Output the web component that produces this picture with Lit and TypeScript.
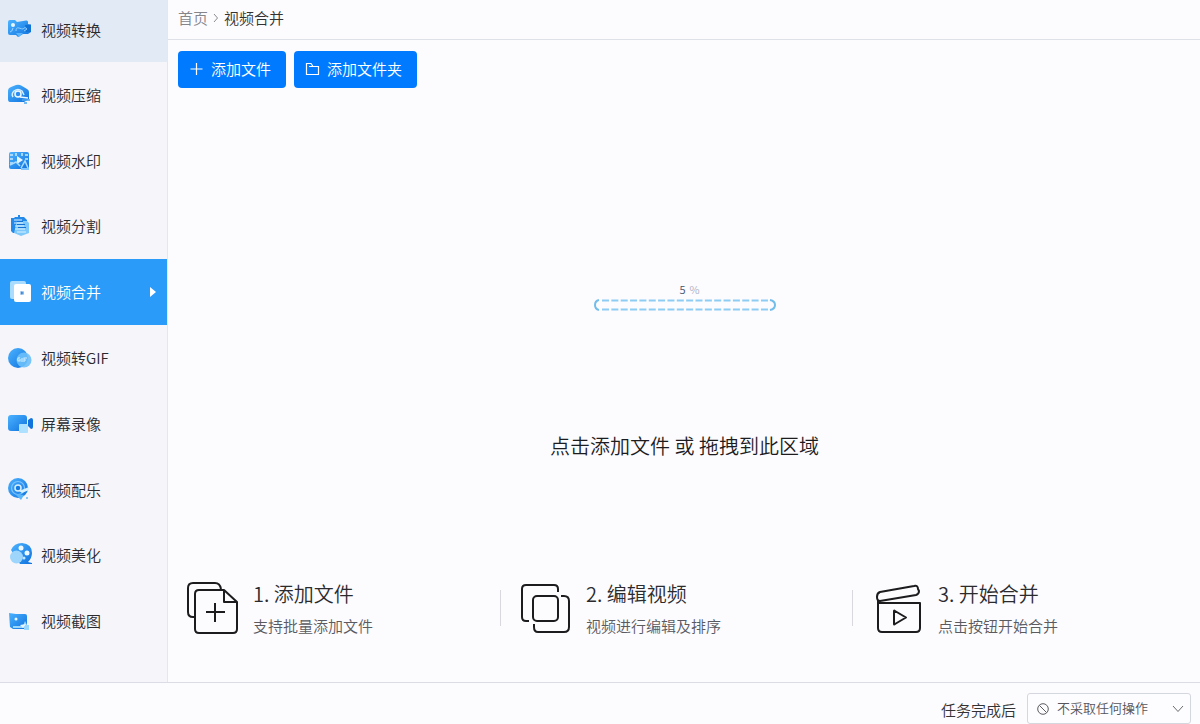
import { LitElement, html, css, svg } from "lit";
import { customElement, state } from "lit/decorators.js";
import { classMap } from "lit/directives/class-map.js";

const icons: Record<string, unknown> = {
  convert: svg`<path d="M3 3H8L10 5L19 3.500Q21 3 21 5V7L24 8V15L21 17H16L11 20L9 18H3Q1 18 1 16V5Q1 3 3 3Z" fill="url(#g)"/><path d="M18 8L24 7.500V15H19Z" fill="#1173d6"/><circle cx="6" cy="8" r="2" fill="#e8f6ff"/><path d="M3 15Q5 15 6 11" fill="none" stroke="#9bd4ff"/><path d="M9 14Q9 10 12 11T16 12Q18 9 20 12L17 14" fill="none" stroke="#8bccff"/><path d="M9 16H16L12 20Z" fill="#5bb6ff"/>`,
  compress: svg`<path d="M1 9Q1 6 4 5L9 3Q12 2 15 4L20 7Q22 8 22 10V17L17 20H3Q1 20 1 17Z" fill="url(#g)"/><path d="M6 15Q4 12 7 9Q11 6 15 9L17 13" fill="none" stroke="#d7f0ff" stroke-width="1.500"/><circle cx="11" cy="12" r="3" fill="#2c8df0" stroke="#f2fbff" stroke-width="1.500"/><path d="M13 15L21 16" stroke="#e9f7ff" stroke-width="1.500"/><path d="M15 18H23M17 21H20" stroke="#4ca6ee" stroke-width="1.500"/>`,
  watermark: svg`<rect x="2" y="4" width="20" height="17" rx="2" fill="url(#g)"/><path d="M3 7H6M3 11H6M3 15H6M18 7H21M18 11H21M9 5V8M15 5V8" stroke="#c9eaff" stroke-width="1.500"/><path d="M10 8L16 12L10 16Z" fill="#e8f7ff"/><path d="M3 17L9 14L13 18M14 20L18 13L21 20" fill="none" stroke="#a9dcff" stroke-width="1.500"/><path d="M14 20H22V22H14Z" fill="#81c5fb"/>`,
  split: svg`<path d="M4 5H7L8 4H11V2H13V4H17L20 7V20H6L4 18Z" fill="#2489e8"/><path d="M10 8H20L22 10V20L14 23L7 20Z" fill="#7fc8fb"/><path d="M7 7H15M7 10H16M8 13H17M8 16H18M10 19H19" stroke="#d7f1ff" stroke-width="1.200"/><path d="M10 8.500H16M10 11.500H18M11 14.500H19" stroke="#1472d7" stroke-width="1"/>`,
  merge: svg`<rect x="3" y="2" width="16" height="18" rx="2" fill="#a9dcff"/><rect x="7" y="5" width="17" height="18" rx="2" fill="#fff"/><rect x="13" y="12" width="4" height="4" rx="1" fill="#a6cbee"/><path d="M14 12.500L17 14L14 15.500Z" fill="#3d8ad5"/>`,
  gif: svg`<circle cx="11" cy="13" r="10" fill="url(#g)"/><circle cx="17" cy="15" r="7.500" fill="#6cc0fa" opacity=".9"/><path d="M13 13Q10 12 11 16H13V14M15 13V17M17 17V13H20M17 15H19" fill="none" stroke="#c9ebff" stroke-width="1.200"/>`,
  record: svg`<rect x="1" y="4" width="19" height="16" rx="3" fill="url(#g)"/><path d="M21 9L24 7Q26 7 26 9V16Q26 18 24 18L21 15Z" fill="#1173dc"/><rect x="12" y="13" width="9" height="9" rx="1" fill="#aee0ff"/>`,
  music: svg`<circle cx="11" cy="11" r="10" fill="url(#g)"/><circle cx="11" cy="11" r="6.500" fill="none" stroke="#7ec4ff" stroke-width="1.200"/><circle cx="11" cy="11" r="3" fill="#147be2" stroke="#d8f0ff" stroke-width="1.500"/><path d="M12 14L22 10V13L15 16Z" fill="#d9f2ff"/><path d="M8 17L14 23L17 18Z" fill="#5bb6f7"/><circle cx="20" cy="21" r="1" fill="#69b9ee"/>`,
  beautify: svg`<path d="M4 8Q7 1 15 1Q25 2 25 11Q25 16 21 20L25 21V22H13Z" fill="url(#g)"/><circle cx="14" cy="6" r="2.500" fill="#edf9ff"/><circle cx="20" cy="11" r="2.500" fill="#edf9ff"/><circle cx="17" cy="16" r="1.500" fill="#c3e7ff"/><circle cx="9.500" cy="15" r="6.500" fill="#9ed5fb"/>`,
  capture: svg`<path d="M2 5L9 6H18Q20 6 20 8V21H6L3 19Z" fill="url(#g)"/><circle cx="9" cy="11" r="1.500" fill="#eaf8ff"/><path d="M6 18H16L18 13L20 17H22V22H17V20H6Z" fill="#9ad7ff"/><path d="M13 17L19 16L16 20Z" fill="#e5f6ff"/>`,
};

const menu = [
  { icon: "convert", label: "视频转换" },
  { icon: "compress", label: "视频压缩" },
  { icon: "watermark", label: "视频水印" },
  { icon: "split", label: "视频分割" },
  { icon: "merge", label: "视频合并" },
  { icon: "gif", label: "视频转GIF" },
  { icon: "record", label: "屏幕录像" },
  { icon: "music", label: "视频配乐" },
  { icon: "beautify", label: "视频美化" },
  { icon: "capture", label: "视频截图" },
];

const steps = [
  {
    title: "1. 添加文件",
    text: "支持批量添加文件",
    icon: svg`<path d="M7 36H6Q1 36 1 31V7Q1 2 6 2H28Q33 2 34 8"/><path d="M12 9H37L50 21V48Q50 52 46 52H12Q8 52 8 48V13Q8 9 12 9Z"/><path d="M37 9V21H50M28 22V41M19 31H38"/>`,
  },
  {
    title: "2. 编辑视频",
    text: "视频进行编辑及排序",
    icon: svg`<path d="M9 40H6Q2 40 2 36V8Q2 4 6 4H34Q38 4 38 8V11"/><rect x="13" y="15" width="25" height="25" rx="4"/><path d="M41 15H44Q49 15 49 20V46Q49 51 44 51H18Q14 51 14 46V43"/>`,
  },
  {
    title: "3. 开始合并",
    text: "点击按钮开始合并",
    icon: svg`<path d="M8 11L42 5Q46 4 46 8L47 10Q47 13 44 14L8 20Q5 20 5 16Q5 12 8 11Z"/><path d="M6 20V47Q6 51 10 51H44Q48 51 48 47V22H7"/><path d="M22 30Q22 29 23 30L34 36.500L23 43Q22 44 22 43Z"/>`,
  },
];

@customElement("app-root")
export class AppRoot extends LitElement {
  @state() private active = "merge";

  static styles = css`
    :host {
      display: grid;
      grid-template-rows: minmax(0, 1fr) 42px;
      height: 100vh;
      overflow: hidden;
      background: #fcfbfe;
      color: #333;
      font-family: "Noto Sans CJK SC", sans-serif;
      font-size: 15px;
      font-weight: 350;
      line-height: 22px;
    }
    * { box-sizing: border-box; }
    button, select { font: inherit; }
    button { border: 0; cursor: pointer; }
    svg { display: block; flex: none; }
    .body { display: grid; grid-template-columns: 168px minmax(0, 1fr); }
    .nav {
      display: grid;
      grid-template-rows: 62px repeat(9, 1fr);
      padding-bottom: 28px;
      background: #f6f5f9;
      border-right: 1px solid #e3e7f0;
    }
    .item {
      display: flex;
      align-items: center;
      gap: 8px;
      padding: 0 11px 0 7px;
      background: none;
      color: #2b2b2e;
      text-align: left;
    }
    .item:first-child { padding-bottom: 2px; background: #e2eaf6; }
    .item.active { background: #2a9bf8; color: #fff; }
    .name { flex: 1; }
    .arrow { border-left: 6px solid #fff; border-top: 5px solid transparent; border-bottom: 5px solid transparent; }
    .main { display: flex; flex-direction: column; min-width: 0; }
    .crumbs {
      display: flex;
      align-items: center;
      gap: 5px;
      height: 40px;
      padding: 0 10px 3px;
      border-bottom: 1px solid #dfe1e8;
    }
    .crumbs a { color: #85858a; text-decoration: none; }
    .tools { display: flex; gap: 8px; padding: 11px 10px 0; }
    .primary {
      display: flex;
      align-items: center;
      gap: 7px;
      height: 37px;
      padding: 0 15px 1px 11px;
      border-radius: 4px;
      background: #007bff;
      color: #fff;
    }
    .drop {
      display: flex;
      flex: 1;
      flex-direction: column;
      align-items: center;
      justify-content: center;
      gap: 119px;
      padding: 76px 0 0 1px;
      background: none;
      color: #1d1d1f;
    }
    .progress { display: grid; justify-items: center; gap: 2px; }
    .percent { display: flex; gap: 4px; padding-left: 10px; font-size: 11px; line-height: 16px; color: #42526b; }
    .unit { color: #aab0c4; }
    .hint { font-size: 20px; line-height: 32px; }
    .steps { display: grid; grid-template-columns: 332fr 352fr 348fr; padding-bottom: 45px; }
    .step { position: relative; display: flex; align-items: center; gap: 13px; padding-left: 19px; }
    .step + .step { padding-left: 20px; }
    .step + .step::before {
      content: "";
      position: absolute;
      left: 0;
      height: 36px;
      border-left: 1px solid #d8d8de;
    }
    .title { margin: 0 0 6px; font-size: 20px; line-height: 30px; font-weight: inherit; color: #2b2b2e; }
    .text { margin: 0; color: #5a5a5f; }
    .footer {
      display: flex;
      align-items: flex-end;
      justify-content: flex-end;
      gap: 11px;
      padding-right: 9px;
      border-top: 1px solid #dcdde4;
    }
    .footer label { padding-bottom: 3px; }
    .picker { display: grid; grid-template-columns: 36px 1fr 19px; align-items: center; width: 164px; height: 31px; }
    .picker > * { grid-row: 1; }
    .picker select {
      grid-column: 1 / -1;
      width: 100%;
      height: 31px;
      padding: 0 24px 1px 29px;
      appearance: none;
      border: 1px solid #d5d7df;
      border-radius: 3px;
      background: #fdfcff;
      color: #55555a;
      font-size: 13px;
    }
    .ban, .chevron { z-index: 1; pointer-events: none; }
    .ban { grid-column: 1; margin-left: 10px; }
    .chevron { grid-column: 3; }
  `;

  render() {
    return html`
      <div class="body">
        <nav class="nav">
          ${menu.map(
            (m) => html`<button
              class=${classMap({ item: true, active: m.icon === this.active })}
              @click=${() => (this.active = m.icon)}
            >
              <svg width="26" height="26" viewBox="0 0 26 26" aria-hidden="true">
                <defs><linearGradient id="g" x1="0" y1="0" x2="1" y2="1"><stop stop-color="#4cb3ff" /><stop offset="1" stop-color="#0f72de" /></linearGradient></defs>
                ${icons[m.icon]}
              </svg>
              <span class="name">${m.label}</span>
              ${m.icon === this.active ? html`<span class="arrow"></span>` : ""}
            </button>`
          )}
        </nav>
        <main class="main">
          <header class="crumbs">
            <a href="#">首页</a>
            <svg width="6" height="10" viewBox="0 0 6 10" fill="none" stroke="#8b8b90"><path d="M1 1L4.500 5L1 9" /></svg>
            <span>视频合并</span>
          </header>
          <div class="tools">
            <button class="primary">
              <svg width="15" height="14" viewBox="0 0 15 14" stroke="#fff" stroke-width="1.200"><path d="M7.500 1V13M1.500 7H13.500" /></svg>
              添加文件
            </button>
            <button class="primary">
              <svg width="15" height="14" viewBox="0 0 15 14" fill="none" stroke="#fff" stroke-width="1.200"><path d="M1.500 12.500V1.500H6L8 4.500H13.500V12.500ZM4 4.500H8" /></svg>
              添加文件夹
            </button>
          </div>
          <button class="drop">
            <span class="progress" role="progressbar" aria-label="进度" aria-valuenow="5" aria-valuemin="0" aria-valuemax="100">
              <span class="percent"><span>5</span><span class="unit">%</span></span>
              <svg width="182" height="12" viewBox="0 0 182 12" fill="none" stroke="#8dccf3" stroke-width="2">
                <path d="M8 1.500H174M8 10.500H174" stroke-dasharray="7 2.350" />
                <path d="M5 1Q1 2 1 6Q1 10 5 11" stroke="#72bdea" />
                <path d="M176 1Q181 2 181 6Q181 10 176 11" stroke="#72bdea" />
              </svg>
            </span>
            <span class="hint">点击添加文件 或 拖拽到此区域</span>
          </button>
          <section class="steps">
            ${steps.map(
              (s) => html`<div class="step">
                <svg width="53" height="54" viewBox="0 0 53 54" fill="none" stroke="#1c1c1e" stroke-width="2" stroke-linejoin="round" aria-hidden="true">${s.icon}</svg>
                <div>
                  <h2 class="title">${s.title}</h2>
                  <p class="text">${s.text}</p>
                </div>
              </div>`
            )}
          </section>
        </main>
      </div>
      <footer class="footer">
        <label for="after">任务完成后</label>
        <div class="picker">
          <svg class="ban" width="12" height="12" viewBox="0 0 12 12" fill="none" stroke="#5c5c61"><circle cx="6" cy="6" r="5.300" /><path d="M2.500 2.500L9.500 9.500" /></svg>
          <select id="after">
            <option>不采取任何操作</option>
            <option>关闭软件</option>
            <option>关闭电脑</option>
          </select>
          <svg class="chevron" width="12" height="8" viewBox="0 0 12 8" fill="none" stroke="#6a6a70"><path d="M1 1L6 6.500L11 1" /></svg>
        </div>
      </footer>
    `;
  }
}
